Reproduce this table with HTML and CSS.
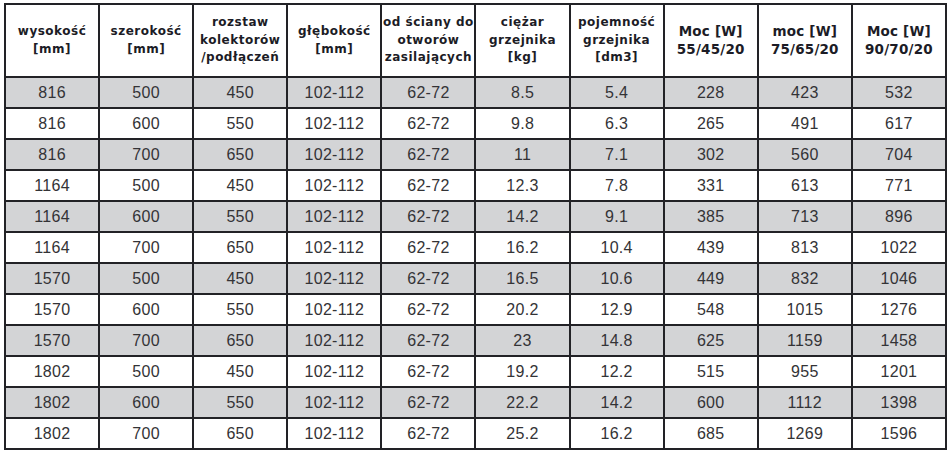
FILE: index.html
```html
<!DOCTYPE html>
<html lang="pl">
<head>
<meta charset="utf-8">
<title>Tabela grzejników</title>
<link rel="stylesheet" href="styles.css">
</head>
<body>
<table class="spec">
  <colgroup>
    <col><col><col><col><col><col><col><col><col><col>
  </colgroup>
  <thead>
    <tr>
      <th>wysokość<br>[mm]</th>
      <th>szerokość<br>[mm]</th>
      <th>rozstaw<br>kolektorów<br>/podłączeń</th>
      <th>głębokość<br>[mm]</th>
      <th>od ściany do<br>otworów<br>zasilających</th>
      <th>ciężar<br>grzejnika<br>[kg]</th>
      <th>pojemność<br>grzejnika<br>[dm3]</th>
      <th class="moc">Moc [W]<br>55/45/20</th>
      <th class="moc">moc [W]<br>75/65/20</th>
      <th class="moc">Moc [W]<br>90/70/20</th>
    </tr>
  </thead>
  <tbody>
    <tr class="alt"><td>816</td><td>500</td><td>450</td><td>102-112</td><td>62-72</td><td>8.5</td><td>5.4</td><td>228</td><td>423</td><td>532</td></tr>
    <tr><td>816</td><td>600</td><td>550</td><td>102-112</td><td>62-72</td><td>9.8</td><td>6.3</td><td>265</td><td>491</td><td>617</td></tr>
    <tr class="alt"><td>816</td><td>700</td><td>650</td><td>102-112</td><td>62-72</td><td>11</td><td>7.1</td><td>302</td><td>560</td><td>704</td></tr>
    <tr><td>1164</td><td>500</td><td>450</td><td>102-112</td><td>62-72</td><td>12.3</td><td>7.8</td><td>331</td><td>613</td><td>771</td></tr>
    <tr class="alt"><td>1164</td><td>600</td><td>550</td><td>102-112</td><td>62-72</td><td>14.2</td><td>9.1</td><td>385</td><td>713</td><td>896</td></tr>
    <tr><td>1164</td><td>700</td><td>650</td><td>102-112</td><td>62-72</td><td>16.2</td><td>10.4</td><td>439</td><td>813</td><td>1022</td></tr>
    <tr class="alt"><td>1570</td><td>500</td><td>450</td><td>102-112</td><td>62-72</td><td>16.5</td><td>10.6</td><td>449</td><td>832</td><td>1046</td></tr>
    <tr><td>1570</td><td>600</td><td>550</td><td>102-112</td><td>62-72</td><td>20.2</td><td>12.9</td><td>548</td><td>1015</td><td>1276</td></tr>
    <tr class="alt"><td>1570</td><td>700</td><td>650</td><td>102-112</td><td>62-72</td><td>23</td><td>14.8</td><td>625</td><td>1159</td><td>1458</td></tr>
    <tr><td>1802</td><td>500</td><td>450</td><td>102-112</td><td>62-72</td><td>19.2</td><td>12.2</td><td>515</td><td>955</td><td>1201</td></tr>
    <tr class="alt"><td>1802</td><td>600</td><td>550</td><td>102-112</td><td>62-72</td><td>22.2</td><td>14.2</td><td>600</td><td>1112</td><td>1398</td></tr>
    <tr><td>1802</td><td>700</td><td>650</td><td>102-112</td><td>62-72</td><td>25.2</td><td>16.2</td><td>685</td><td>1269</td><td>1596</td></tr>
  </tbody>
</table>
</body>
</html>
```

FILE: styles.css
```css
html, body {
  margin: 0;
  padding: 0;
  background: #ffffff;
}

body {
  padding: 3px 0 0 4px;
}

.spec {
  border-collapse: collapse;
  table-layout: fixed;
  width: 943px;
  font-family: "Liberation Sans", Arial, sans-serif;
}

.spec th,
.spec td {
  border: 2px solid #222226;
  text-align: center;
  padding: 0;
  overflow: hidden;
  white-space: nowrap;
}

.spec th {
  height: 71px;
  font-family: "DejaVu Sans", Verdana, sans-serif;
  font-size: 12px;
  font-weight: bold;
  line-height: 17.5px;
  letter-spacing: 0.5px;
  color: #1c1c26;
  vertical-align: middle;
}

.spec th.moc {
  font-size: 13.5px;
  line-height: 17.5px;
  letter-spacing: 0.2px;
}

.spec td {
  height: 29px;
  font-size: 16px;
  color: #333336;
  letter-spacing: 0.3px;
}

.spec tr.alt td {
  background: #d3d4d6;
}
```
